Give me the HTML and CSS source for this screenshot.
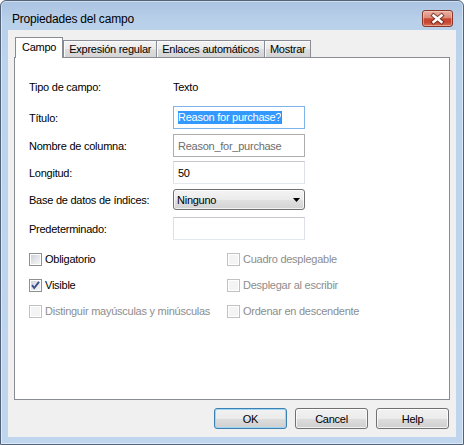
FILE: index.html
```html
<!DOCTYPE html>
<html>
<head>
<meta charset="utf-8">
<title>Propiedades del campo</title>
<link rel="stylesheet" href="styles.css">
</head>
<body>
<div class="window">
  <div class="titlebar">
    <span class="title">Propiedades del campo</span>
    <div class="close">
      <svg width="29" height="15" viewBox="0 0 29 15">
        <path d="M10.5 4.5 L18.5 11 M18.5 4.5 L10.5 11" stroke="#5a2016" stroke-width="4.4" stroke-linecap="square" fill="none" opacity="0.75"/>
        <path d="M10.5 4.5 L18.5 11 M18.5 4.5 L10.5 11" stroke="#ffffff" stroke-width="2.4" stroke-linecap="square" fill="none"/>
      </svg>
    </div>
  </div>
  <div class="client">
    <div class="tabs">
      <div class="tab active">Campo</div>
      <div class="tab">Expresión regular</div>
      <div class="tab">Enlaces automáticos</div>
      <div class="tab">Mostrar</div>
    </div>
    <div class="panel">
      <div class="form">
        <div class="row row-type"><span class="label">Tipo de campo:</span><span class="value">Texto</span></div>
        <div class="row row-title"><span class="label">Título:</span><div class="field focus"><span class="sel">Reason for purchase?</span><span class="caret"></span></div></div>
        <div class="row row-name"><span class="label">Nombre de columna:</span><div class="field readonly">Reason_for_purchase</div></div>
        <div class="row row-len"><span class="label">Longitud:</span><div class="field">50</div></div>
        <div class="row row-combo"><span class="label">Base de datos de índices:</span><div class="combo"><span>Ninguno</span><svg class="arrow" width="7" height="4" viewBox="0 0 7 4"><path d="M0 0 H7 L3.5 4 Z" fill="#000"/></svg></div></div>
        <div class="row row-default"><span class="label">Predeterminado:</span><div class="field"></div></div>
      </div>
      <div class="checks">
        <div class="check"><span class="box"></span><span class="ctext">Obligatorio</span></div>
        <div class="check disabled"><span class="box"></span><span class="ctext">Cuadro desplegable</span></div>
        <div class="check"><span class="box checked"><svg width="11" height="11" viewBox="0 0 11 11"><path d="M2 5.2 L4.2 8 L9 1.8" stroke="#3d4f8c" stroke-width="1.9" fill="none"/></svg></span><span class="ctext">Visible</span></div>
        <div class="check disabled"><span class="box"></span><span class="ctext">Desplegar al escribir</span></div>
        <div class="check disabled"><span class="box"></span><span class="ctext">Distinguir mayúsculas y minúsculas</span></div>
        <div class="check disabled"><span class="box"></span><span class="ctext">Ordenar en descendente</span></div>
      </div>
    </div>
    <div class="buttons">
      <div class="btn default">OK</div>
      <div class="btn">Cancel</div>
      <div class="btn">Help</div>
    </div>
  </div>
</div>
</body>
</html>
```
FILE: styles.css
```css
html, body {
  margin: 0;
  padding: 0;
}
body {
  width: 464px;
  height: 445px;
  overflow: hidden;
  font-family: "Liberation Sans", Arial, sans-serif;
  font-size: 11px;
  letter-spacing: -0.25px;
  color: #000;
  background: #fff;
}
.window {
  box-sizing: border-box;
  width: 464px;
  height: 445px;
  border: 1px solid #52637a;
  border-radius: 6px 6px 0 0;
  background: linear-gradient(180deg, #aac3e1 0px, #b9d0ea 20px, #bcd3ed 60px, #c0d6ef 100%);
  box-shadow: inset 0 0 0 1px rgba(255,255,255,0.45);
  display: flex;
  flex-direction: column;
}
.titlebar {
  height: 29px;
  flex: none;
  display: flex;
  align-items: flex-start;
}
.title {
  font-size: 12px;
  letter-spacing: -0.2px;
  line-height: 14px;
  margin: 11px 0 0 11px;
  color: #000;
}
.close {
  box-sizing: border-box;
  width: 31px;
  height: 17px;
  margin: 9px 10px 0 auto;
  border: 1px solid #86372a;
  border-radius: 3px;
  background: linear-gradient(180deg, #eab0a3 0%, #dd8b79 45%, #c9442f 52%, #c54a36 78%, #d9735b 100%);
  box-shadow: inset 0 0 0 1px rgba(255,220,210,0.45);
  display: flex;
}
.client {
  flex: 1;
  margin: 0 7px 7px 7px;
  background: #f0f0f0;
  display: flex;
  flex-direction: column;
}
.tabs {
  height: 20px;
  margin: 7px 0 0 7px;
  display: flex;
  align-items: flex-end;
}
.tab {
  box-sizing: border-box;
  height: 17px;
  padding: 2px 5px 1px 5px;
  line-height: 13px;
  border: 1px solid #898c95;
  border-bottom: none;
  background: linear-gradient(180deg, #f3f3f3 0%, #ebebeb 50%, #dedede 52%, #d4d4d4 100%);
  box-shadow: inset 1px 1px 0 #fbfbfb;
  white-space: nowrap;
}
.tab + .tab {
  margin-left: -1px;
}
.tab.active {
  height: 21px;
  margin-bottom: -1px;
  padding: 3px 6px 4px 6px;
  background: #fff;
  box-shadow: none;
  position: relative;
  z-index: 1;
}
.tab.active + .tab {
  margin-left: 0;
}
.panel {
  box-sizing: border-box;
  width: 436px;
  height: 343px;
  margin-left: 6px;
  border: 1px solid #898c95;
  background: #fff;
  padding: 17px 0 0 14px;
}
.row {
  display: flex;
  align-items: center;
  height: 23px;
}
.row-title { margin-top: 8px; }
.row-name { margin-top: 5px; }
.row-len { margin-top: 4px; }
.row-combo { margin-top: 5px; height: 21px; }
.row-default { margin-top: 7px; }
.label {
  width: 144px;
  flex: none;
}
.field {
  box-sizing: border-box;
  width: 132px;
  height: 23px;
  border: 1px solid;
  border-color: #c4c8ce #dde1e6 #e3e9ef #dde1e6;
  background: #fff;
  padding: 0 4px;
  display: flex;
  align-items: center;
  white-space: nowrap;
}
.field.focus {
  border-color: #7eb4ea;
}
.field.readonly {
  border-color: #adadad;
  color: #6d6d6d;
}
.sel {
  display: inline-block;
  line-height: 13px;
  background: #3399ff;
  color: #fff;
}
.caret {
  display: inline-block;
  width: 1px;
  height: 13px;
  background: #c86a1c;
}
.combo {
  box-sizing: border-box;
  width: 132px;
  height: 21px;
  border: 1px solid #707070;
  border-radius: 3px;
  background: linear-gradient(180deg, #f4f4f4 0%, #ebebeb 50%, #e0e0e0 52%, #d3d3d3 100%);
  box-shadow: inset 0 0 0 1px rgba(255,255,255,0.7);
  padding: 0 4px 0 3px;
  display: flex;
  align-items: center;
  justify-content: space-between;
}
.arrow {
  display: block;
}
.checks {
  margin-top: 13px;
  display: grid;
  grid-template-columns: 198px auto;
  grid-auto-rows: 13px;
  row-gap: 13px;
}
.check {
  display: flex;
  align-items: center;
  height: 13px;
  white-space: nowrap;
}
.box {
  box-sizing: border-box;
  width: 13px;
  height: 13px;
  flex: none;
  border: 1px solid #8e8f8f;
  background: linear-gradient(135deg, #c9cdd3 0%, #e6e8eb 55%, #f7f7f7 100%);
  box-shadow: inset 0 0 0 1px #fff;
  display: flex;
}
.box svg {
  display: block;
}
.check.disabled .box {
  border-color: #c1c1c1;
  background: #f4f4f4;
}
.ctext {
  margin-left: 3px;
  line-height: 13px;
}
.check.disabled .ctext {
  color: #8d8d8d;
}
.buttons {
  margin: 8px 7px 0 0;
  display: flex;
  justify-content: flex-end;
  gap: 8px;
}
.btn {
  box-sizing: border-box;
  width: 73px;
  height: 21px;
  border: 1px solid #707070;
  border-radius: 3px;
  background: linear-gradient(180deg, #f2f2f2 0%, #ebebeb 50%, #dddddd 52%, #cfcfcf 100%);
  box-shadow: inset 0 0 0 1px rgba(255,255,255,0.75);
  display: flex;
  align-items: center;
  justify-content: center;
}
.btn.default {
  border-color: #3c7fb1;
  box-shadow: inset 0 0 0 1px #9fd5f5;
}
```
